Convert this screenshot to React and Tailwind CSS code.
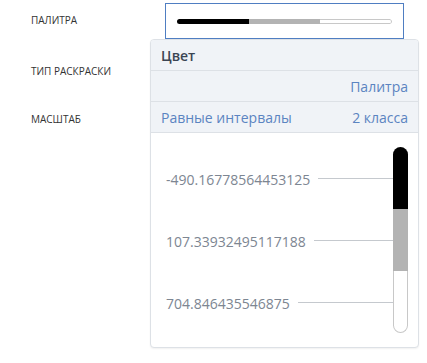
import React from "react";

const classes = [
  { value: "-490.16778564453125", color: "bg-black", cap: "rounded-t-full" },
  { value: "107.33932495117188", color: "bg-[#b3b3b3]", cap: "" },
  { value: "704.846435546875", color: "bg-white border border-t-0 border-[#c8c8c8]", cap: "rounded-b-full" },
];

const App = () => {
  return (
    <div
      className="w-[427px] h-[363px] bg-white flex"
      style={{ fontFamily: "'Open Sans', sans-serif" }}
    >
      {/* labels */}
      <div className="w-[165px] pl-[31px] flex flex-col text-[10px] text-[#333] uppercase">
        <div className="h-[40px] flex items-center">Палитра</div>
        <div className="h-[62px] flex items-center">Тип раскраски</div>
        <div className="h-[34px] flex items-center">Масштаб</div>
      </div>

      {/* select + dropdown */}
      <div className="relative pt-[3px]">
        <div className="w-[239px] h-[36px] border border-[#4f7ec2] flex items-center px-[11px]">
          <div className="flex w-full h-[5px] rounded-full overflow-hidden">
            <div className="w-[72px] bg-black" />
            <div className="w-[71px] bg-[#b3b3b3]" />
            <div className="flex-1 bg-white border border-l-0 border-[#c8c8c8] rounded-r-full" />
          </div>
        </div>

        <div className="absolute left-[-15px] top-[39px] w-[269px] h-[309px] border border-[#dde1e6] rounded-[4px] bg-white shadow-[0_1px_2px_rgba(0,0,0,0.06)] overflow-hidden flex flex-col">
          <div className="h-[31px] bg-[#f0f3f7] border-b border-[#dde1e6] flex items-center px-[10px] text-[14px] text-[#3b4553] font-semibold">
            Цвет
          </div>
          <div className="h-[31px] bg-[#f0f3f7] border-b border-[#dde1e6] flex items-center justify-end px-[10px] text-[14px] text-[#5b84c1]">
            Палитра
          </div>
          <div className="h-[31px] bg-[#f0f3f7] border-b border-[#dde1e6] flex items-center justify-between px-[10px] text-[14px] text-[#5b84c1]">
            <span>Равные интервалы</span>
            <span>2 класса</span>
          </div>

          <div className="flex-1 flex flex-col pt-[14px] pl-[15px] pr-[10px]">
            {classes.map((c) => (
              <div key={c.value} className="h-[62px] flex items-center">
                <span className="text-[14px] text-[#7d8692] pt-[2px]">{c.value}</span>
                <div className="flex-1 h-px bg-[#c5c9ce] ml-[8px]" />
                <div className={`w-[15px] h-full ${c.color} ${c.cap}`} />
              </div>
            ))}
          </div>
        </div>
      </div>
    </div>
  );
};

export default App;
